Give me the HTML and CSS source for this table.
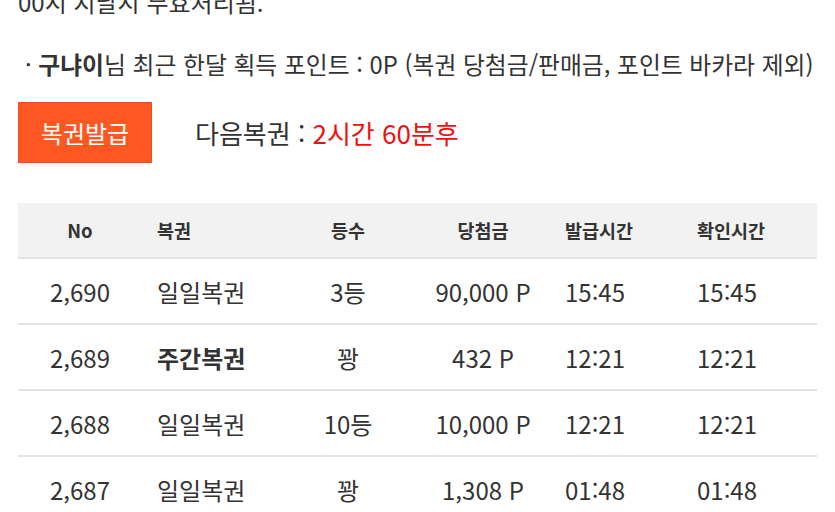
FILE: index.html
```html
<!DOCTYPE html>
<html lang="ko">
<head>
<meta charset="utf-8">
<link rel="stylesheet" href="styles.css">
</head>
<body>
<div class="page">
  <p class="notice">00시 지날시 무효처리됨.</p>
  <p class="points">· <b>구냐이</b>님 최근 한달 획득 포인트 : 0P (복권 당첨금/판매금, 포인트 바카라 제외)</p>
  <div class="issue">
    <button class="btn">복권발급</button>
    <span class="next">다음복권 : <span class="red">2시간 60분후</span></span>
  </div>
  <div class="table">
    <div class="row head">
      <div class="c1">No</div><div class="c2">복권</div><div class="c3">등수</div><div class="c4">당첨금</div><div class="c5">발급시간</div><div class="c6">확인시간</div>
    </div>
    <div class="row">
      <div class="c1">2,690</div><div class="c2">일일복권</div><div class="c3">3등</div><div class="c4">90,000 P</div><div class="c5">15:45</div><div class="c6">15:45</div>
    </div>
    <div class="row">
      <div class="c1">2,689</div><div class="c2"><b>주간복권</b></div><div class="c3">꽝</div><div class="c4">432 P</div><div class="c5">12:21</div><div class="c6">12:21</div>
    </div>
    <div class="row">
      <div class="c1">2,688</div><div class="c2">일일복권</div><div class="c3">10등</div><div class="c4">10,000 P</div><div class="c5">12:21</div><div class="c6">12:21</div>
    </div>
    <div class="row">
      <div class="c1">2,687</div><div class="c2">일일복권</div><div class="c3">꽝</div><div class="c4">1,308 P</div><div class="c5">01:48</div><div class="c6">01:48</div>
    </div>
  </div>
</div>
</body>
</html>
```
FILE: styles.css
```css
html, body {
  margin: 0;
  padding: 0;
  background: #fff;
  overflow: hidden;
}
.page {
  font-family: "Noto Sans CJK KR", "Noto Sans", sans-serif;
  color: #333;
  padding: 0 18px;
}
.notice {
  margin: -13px 0 0;
  font-size: 24px;
  line-height: 30px;
}
.points {
  margin: 32px 0 0;
  padding-left: 7px;
  font-size: 23.8px;
  line-height: 30px;
  white-space: nowrap;
}
.points b { font-weight: 700; }
.issue {
  display: flex;
  align-items: center;
  margin-top: 23px;
}
.btn {
  width: 134px;
  height: 61px;
  background: #ff5722;
  border: 1px solid #e9501f;
  color: #fff;
  font-family: inherit;
  font-size: 24px;
  padding: 0;
}
.next {
  margin-left: 43px;
  font-size: 26px;
}
.red { color: #f20f0f; }
.table {
  margin-top: 40px;
  width: 799px;
}
.row {
  display: grid;
  grid-template-columns: 124px 148px 116px 154px 132px 125px;
  height: 64px;
  align-items: center;
  border-bottom: 2px solid #e2e2e2;
  font-size: 24px;
}
.row.head {
  background: #f2f2f2;
  height: 54px;
  font-size: 18.5px;
  font-weight: 700;
}
.c1, .c3, .c4 { text-align: center; }
.c2 { padding-left: 15px; }
.c5, .c6 { padding-left: 5px; }
.c2 b { font-weight: 700; }
```
